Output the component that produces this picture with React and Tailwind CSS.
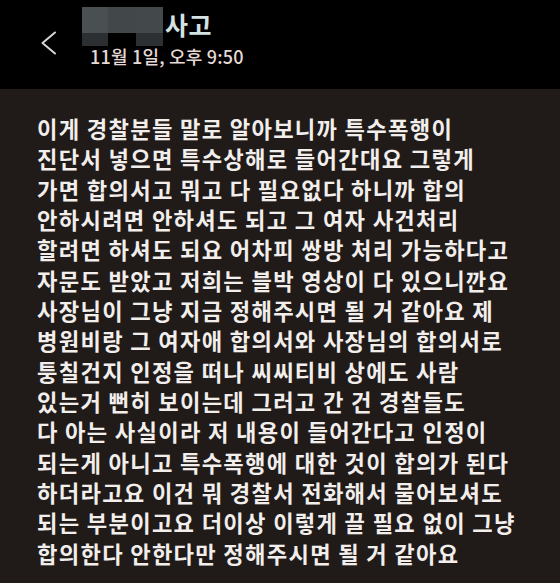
import React from "react";

const lines = [
  "이게 경찰분들 말로 알아보니까 특수폭행이",
  "진단서 넣으면 특수상해로 들어간대요 그렇게",
  "가면 합의서고 뭐고 다 필요없다 하니까 합의",
  "안하시려면 안하셔도 되고 그 여자 사건처리",
  "할려면 하셔도 되요 어차피 쌍방 처리 가능하다고",
  "자문도 받았고 저희는 블박 영상이 다 있으니깐요",
  "사장님이 그냥 지금 정해주시면 될 거 같아요 제",
  "병원비랑 그 여자애 합의서와 사장님의 합의서로",
  "퉁칠건지 인정을 떠나 씨씨티비 상에도 사람",
  "있는거 뻔히 보이는데 그러고 간 건 경찰들도",
  "다 아는 사실이라 저 내용이 들어간다고 인정이",
  "되는게 아니고 특수폭행에 대한 것이 합의가 된다",
  "하더라고요 이건 뭐 경찰서 전화해서 물어보셔도",
  "되는 부분이고요 더이상 이렇게 끌 필요 없이 그냥",
  "합의한다 안한다만 정해주시면 될 거 같아요",
];

export default function App() {
  return (
    <div
      className="w-[560px] h-[583px] overflow-hidden bg-[#201b19] flex flex-col"
      style={{ fontFamily: '"Noto Sans CJK KR", "Noto Sans", sans-serif' }}
    >
      <div className="h-[89px] bg-black flex items-start shrink-0">
        <div className="pl-[40px] pt-[31px] w-[82px] shrink-0">
          <svg width="17" height="24" viewBox="0 0 17 24" fill="none">
            <polyline
              points="15,1.5 2.5,12 15,22.5"
              stroke="#d6d6d6"
              strokeWidth="2"
              strokeLinecap="round"
              strokeLinejoin="round"
            />
          </svg>
        </div>
        <div className="flex flex-col pt-[7px]">
          <div className="flex items-start">
            <div className="flex flex-col w-[81px] h-[39px] shrink-0">
              <div className="flex h-[26px]">
                <div className="w-[26px] bg-[#4a5052]" />
                <div className="w-[28px] bg-[#42484a]" />
                <div className="w-[27px] bg-[#43494b]" />
              </div>
              <div className="flex h-[13px]">
                <div className="w-[26px] bg-[#2b2f31]" />
                <div className="w-[28px] bg-black" />
                <div className="w-[27px] bg-[#2c3032]" />
              </div>
            </div>
            <div className="ml-[2px] -mt-[1px] text-[25px] leading-[36px] font-bold text-[#d4e2e2] tracking-[0.5px] whitespace-nowrap">
              사고
            </div>
          </div>
          <div className="ml-[8px] -mt-[2px] text-[18px] leading-[25px] font-medium text-[#e6d9d5] whitespace-nowrap tracking-[0.2px]">
            11월 1일, 오후 9:50
          </div>
        </div>
      </div>
      <div className="pl-[37px] pt-[24px] flex flex-col text-[22.2px] leading-[30.33px] font-bold text-[#f2eeec] tracking-[1.3px]">
        {lines.map((l, i) => (
          <div key={i} className="whitespace-nowrap">
            {l}
          </div>
        ))}
      </div>
    </div>
  );
}
